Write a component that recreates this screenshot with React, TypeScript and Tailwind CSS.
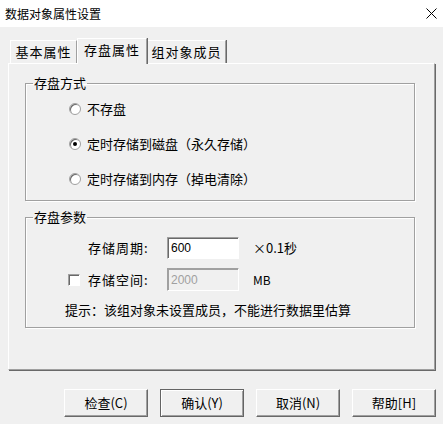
import React, { useState } from "react";

const font = { fontFamily: '"Noto Sans CJK SC", "Noto Sans", sans-serif' };

type Mode = "none" | "disk" | "memory";

function Tab({ label, active, width }: { label: string; active?: boolean; width: string }) {
  if (active) {
    return (
      <div
        className={`${width} h-[26px] -mb-px relative z-10 flex items-center justify-center bg-[#f0f0f0] border-t border-l border-white border-r border-r-[#a0a0a0] shadow-[1px_0_0_#696969] text-[13px] tracking-[1px] text-black pb-[3px]`}
      >
        {label}
      </div>
    );
  }
  return (
    <div
      className={`${width} h-[23px] flex items-center justify-center bg-[#f0f0f0] border-t border-l border-white border-r border-r-[#a0a0a0] shadow-[1px_0_0_#696969] text-[13px] tracking-[1px] text-black`}
    >
      {label}
    </div>
  );
}

function Radio({ checked, label, onClick }: { checked: boolean; label: string; onClick: () => void }) {
  return (
    <button onClick={onClick} className="h-[35px] flex items-center pl-[43px] text-left">
      <span className="w-[12px] h-[12px] rounded-full bg-white border border-[#a0a0a0] shadow-[inset_1px_1px_0_#696969] flex items-center justify-center">
        {checked && <span className="w-[4px] h-[4px] rounded-full bg-black" />}
      </span>
      <span className="ml-[6px] text-[13px] text-black">{label}</span>
    </button>
  );
}

function WinButton({ label, primary }: { label: string; primary?: boolean }) {
  return (
    <button
      className={`w-[84px] h-[28px] flex items-center justify-center bg-[#f0f0f0] text-[13px] text-black ${
        primary
          ? "border border-[#646464] shadow-[inset_1px_1px_0_white,inset_-1px_-1px_0_#a0a0a0]"
          : "border-t border-l border-white border-r border-b border-r-[#696969] border-b-[#696969] shadow-[inset_-1px_-1px_0_#a0a0a0]"
      }`}
    >
      {label}
    </button>
  );
}

export default function App() {
  const [mode, setMode] = useState<Mode>("disk");
  const [period, setPeriod] = useState("600");
  const [useSpace, setUseSpace] = useState(false);

  return (
    <div className="w-[443px] h-[424px] flex flex-col bg-[#f0f0f0] overflow-hidden select-none" style={font}>
      <div className="h-[27px] bg-white flex items-center justify-between pl-[5px] pr-[5px]">
        <span className="text-[12px] text-black">数据对象属性设置</span>
        <svg width="11" height="11" viewBox="0 0 11 11" className="mr-[1px]">
          <path d="M0.5 0.5 L10.5 10.5 M10.5 0.5 L0.5 10.5" stroke="#000" strokeWidth="1" />
        </svg>
      </div>

      <div className="flex-1 flex flex-col px-[8px] pt-[10px]">
        <div className="h-[26px] flex items-end pl-[2px]">
          <Tab label="基本属性" width="w-[67px]" />
          <Tab label="存盘属性" width="w-[70px]" active />
          <Tab label="组对象成员" width="w-[79px]" />
        </div>

        <div className="h-[307px] border-t border-l border-white border-r border-b border-r-[#a0a0a0] border-b-[#a0a0a0] shadow-[1px_1px_0_#696969] pl-[16px] pr-[19px] pt-[11px]">
          <fieldset className="border border-[#a0a0a0] shadow-[inset_1px_1px_0_white,1px_1px_0_white] flex flex-col pb-[4px]">
            <legend className="ml-[7px] px-[1px] text-[13px] leading-[16px] text-black">存盘方式</legend>
            <Radio label="不存盘" checked={mode === "none"} onClick={() => setMode("none")} />
            <Radio label="定时存储到磁盘（永久存储）" checked={mode === "disk"} onClick={() => setMode("disk")} />
            <Radio label="定时存储到内存（掉电清除）" checked={mode === "memory"} onClick={() => setMode("memory")} />
          </fieldset>

          <fieldset className="mt-[8px] border border-[#a0a0a0] shadow-[inset_1px_1px_0_white,1px_1px_0_white] flex flex-col pt-[12px] pb-[9px]">
            <legend className="ml-[7px] px-[1px] text-[13px] leading-[16px] text-black">存盘参数</legend>
            <div className="h-[22px] flex items-center">
              <span className="w-[62px]" />
              <span className="w-[79px] text-[13px] tracking-[1px] text-black">存储周期:</span>
              <input
                value={period}
                onChange={(e) => setPeriod(e.target.value)}
                className="w-[72px] h-[22px] bg-white border border-t-[#a0a0a0] border-l-[#a0a0a0] border-r-white border-b-white shadow-[inset_1px_1px_0_#696969] px-[3px] text-[12px] text-black outline-none"
                style={{ fontFamily: '"Liberation Sans", Arial, sans-serif' }}
              />
              <span className="ml-[14px] text-[13px] text-black">×0.1秒</span>
            </div>
            <div className="mt-[9px] h-[23px] flex items-center">
              <span className="w-[62px] flex justify-end pr-[8px]">
                <button
                  onClick={() => setUseSpace(!useSpace)}
                  className="w-[12px] h-[12px] bg-white border border-t-[#a0a0a0] border-l-[#a0a0a0] border-r-white border-b-white shadow-[inset_1px_1px_0_#696969] flex items-center justify-center"
                >
                  {useSpace && (
                    <svg width="8" height="8" viewBox="0 0 8 8">
                      <path d="M1 4 L3 6 L7 1" stroke="#000" strokeWidth="1.5" fill="none" />
                    </svg>
                  )}
                </button>
              </span>
              <span className="w-[79px] text-[13px] tracking-[1px] text-black">存储空间:</span>
              <input
                value="2000"
                disabled={!useSpace}
                readOnly
                className="w-[72px] h-[23px] bg-[#f0f0f0] border border-t-[#a0a0a0] border-l-[#a0a0a0] border-r-white border-b-white shadow-[inset_1px_1px_0_#a0a0a0] px-[3px] text-[12px] text-[#a0a0a0] outline-none"
                style={{ fontFamily: '"Liberation Sans", Arial, sans-serif' }}
              />
              <span className="ml-[14px] text-[12px] text-black">MB</span>
            </div>
            <div className="mt-[10px] h-[17px] flex items-center pl-[39px] text-[13px] text-black">
              提示：该组对象未设置成员，不能进行数据里估算
            </div>
          </fieldset>
        </div>

        <div className="mt-[19px] flex justify-end gap-[12px] mr-[-1px]">
          <WinButton label="检查(C)" />
          <WinButton label="确认(Y)" primary />
          <WinButton label="取消(N)" />
          <WinButton label="帮助[H]" />
        </div>
      </div>
    </div>
  );
}
